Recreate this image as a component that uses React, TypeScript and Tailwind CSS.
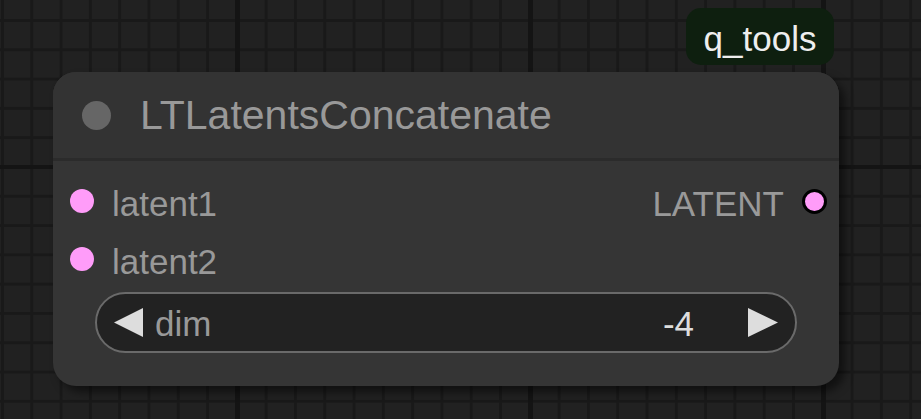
import React from "react";

const font = { fontFamily: '"Liberation Sans", Arial, sans-serif' };

function Slot({ label }: { label: string }) {
  return (
    <div className="flex items-center">
      <div className="w-[24px] h-[24px] rounded-full bg-[#ff9cf9]" />
      <span className="ml-[18px] mt-[4px] text-[35px] leading-none text-[#999999]">{label}</span>
    </div>
  );
}

export default function App() {
  return (
    <div
      className="relative w-[921px] h-[419px] overflow-hidden bg-[#212121] [background-image:linear-gradient(to_right,#141414_5px,transparent_5px),linear-gradient(to_bottom,#141414_4px,transparent_4px),linear-gradient(to_right,#191919_3px,transparent_3px),linear-gradient(to_bottom,#191919_3px,transparent_3px)] [background-size:293px_293px,293px_293px,29.3px_29.3px,29.3px_29.3px] [background-position:235px_0,0_165px,1px_0,0_19px]"
      style={font}
    >
      {/* badge */}
      <div className="absolute left-[686px] top-[8px] w-[148px] h-[57px] rounded-[15px] bg-[#0e1f0f] flex items-center justify-center">
        <span className="mt-[3px] text-[35px] leading-none text-[#eeeeee]">q_tools</span>
      </div>

      {/* node */}
      <div className="absolute left-[53px] top-[72px] w-[786px] h-[314px] rounded-[23px] bg-[#353535] shadow-[6px_6px_9px_rgba(0,0,0,0.5)] flex flex-col">
        <div className="h-[89px] rounded-t-[23px] bg-[#333333] border-b-[3px] border-[#2b2b2b] flex items-center pl-[29px]">
          <div className="w-[29px] h-[29px] rounded-full bg-[#666666]" />
          <span className="ml-[29px] text-[41px] leading-none text-[#999999]">LTLatentsConcatenate</span>
        </div>

        <div className="pt-[11px] flex flex-col">
          <div className="h-[58px] flex items-center justify-between pl-[17px] pr-[12px]">
            <Slot label="latent1" />
            <div className="flex items-center">
              <span className="mt-[4px] text-[35px] leading-none text-[#999999]">LATENT</span>
              <div className="ml-[18px] w-[25px] h-[25px] rounded-full bg-[#ff9cf9] border-[3px] border-black" />
            </div>
          </div>
          <div className="h-[58px] flex items-center pl-[17px]">
            <Slot label="latent2" />
          </div>

          <div className="mt-[4px] mx-[42px] h-[61px] rounded-full border-2 border-[#6a6a6a] bg-[#222222] flex items-center pl-[17px] pr-[17px]">
            <svg width="29" height="29" viewBox="0 0 29 29">
              <polygon points="29,0 29,29 0,14.5" fill="#dddddd" />
            </svg>
            <span className="ml-[12px] mt-[2px] text-[35px] leading-none text-[#999999]">dim</span>
            <span className="ml-auto mt-[2px] text-[35px] leading-none text-[#dddddd]">-4</span>
            <svg className="ml-[54px]" width="30" height="29" viewBox="0 0 30 29">
              <polygon points="0,0 30,14.5 0,29" fill="#dddddd" />
            </svg>
          </div>
        </div>
      </div>
    </div>
  );
}
